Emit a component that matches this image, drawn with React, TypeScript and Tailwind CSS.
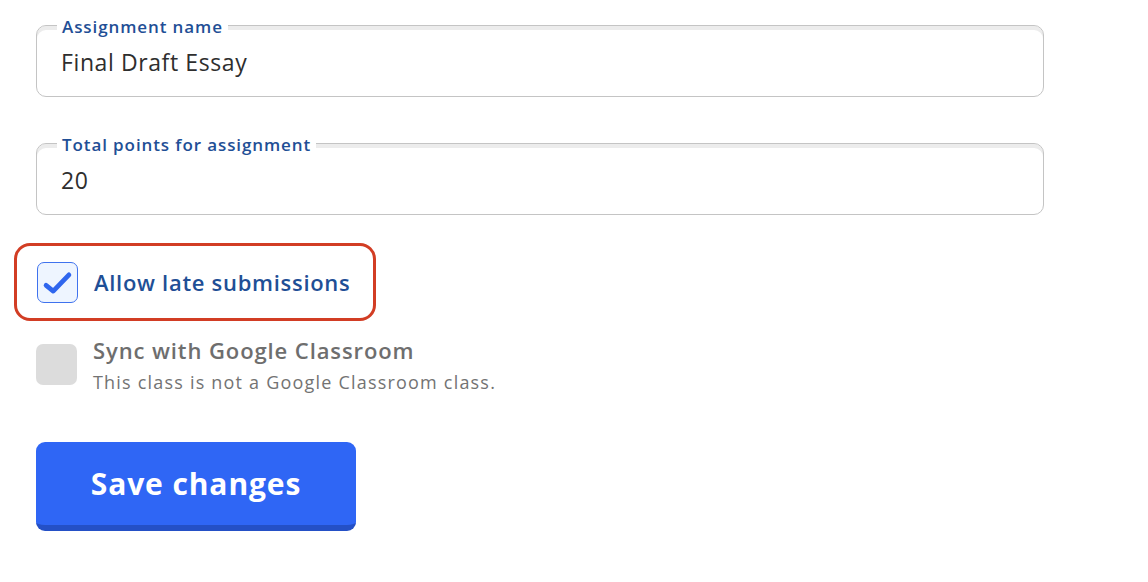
import React, { useState } from 'react';

const font = { fontFamily: '"Open Sans", Lato, sans-serif' };

const Field: React.FC<{ label: string; value: string; onChange: (v: string) => void }> = ({ label, value, onChange }) => (
  <div className="relative h-[72px] w-[1008px] rounded-[10px] border border-[#c4c4c4] shadow-[inset_0_4px_0_#ececec]">
    <span className="absolute left-[20px] top-[-11px] bg-white px-[5px] text-[17px] font-semibold leading-[24px] tracking-[0.9px] text-[#1f4f96]">
      {label}
    </span>
    <input
      type="text"
      value={value}
      onChange={e => onChange(e.target.value)}
      className="h-full w-full rounded-[10px] bg-transparent px-[24px] pt-[1px] text-[23px] tracking-[0.6px] text-[#2e2e2e] outline-none"
    />
  </div>
);

const App: React.FC = () => {
  const [name, setName] = useState('Final Draft Essay');
  const [points, setPoints] = useState('20');
  const [late, setLate] = useState(true);

  return (
    <div className="min-h-[582px] bg-white pl-[36px] pt-[25px]" style={font}>
      <Field label="Assignment name" value={name} onChange={setName} />
      <div className="mt-[46px]">
        <Field label="Total points for assignment" value={points} onChange={setPoints} />
      </div>

      <div className="ml-[-22px] mt-[28px] inline-flex h-[78px] items-center rounded-[16px] border-[3px] border-[#d23d24] pl-[20px] pr-[23px]">
        <label className="flex cursor-pointer items-center gap-[16px]">
          <button
            type="button"
            onClick={() => setLate(!late)}
            className={`flex h-[41px] w-[41px] items-center justify-center rounded-[7px] border ${late ? 'border-[#3f72ee] bg-[#eef5ff]' : 'border-[#c4c4c4] bg-white'}`}
          >
            {late && (
              <svg width="41" height="41" viewBox="0 0 41 41" fill="none">
                <path d="M8.5 23.5 L16 29.5 L32.5 12.5" stroke="#2f66ee" strokeWidth="5" strokeLinecap="round" strokeLinejoin="round" />
              </svg>
            )}
          </button>
          <span className="text-[22px] font-semibold tracking-[0.7px] text-[#1f4f96]">Allow late submissions</span>
        </label>
      </div>

      <div className="mt-[19px] flex gap-[16px]">
        <div className="mt-[4px] h-[41px] w-[41px] rounded-[7px] bg-[#dcdcdc]" />
        <div className="flex flex-col">
          <span className="text-[22px] font-semibold leading-[20px] tracking-[0.9px] text-[#6e6e6e]">Sync with Google Classroom</span>
          <span className="mt-[11px] text-[18px] leading-[22px] tracking-[1.2px] text-[#737373]">This class is not a Google Classroom class.</span>
        </div>
      </div>

      <button
        type="button"
        className="mt-[49px] flex h-[89px] w-[320px] items-center justify-center rounded-[9px] border-b-[6px] border-[#2450c6] bg-[#2f66f5] text-[30px] font-bold tracking-[0.9px] text-white"
      >
        Save changes
      </button>
    </div>
  );
};

export default App;
